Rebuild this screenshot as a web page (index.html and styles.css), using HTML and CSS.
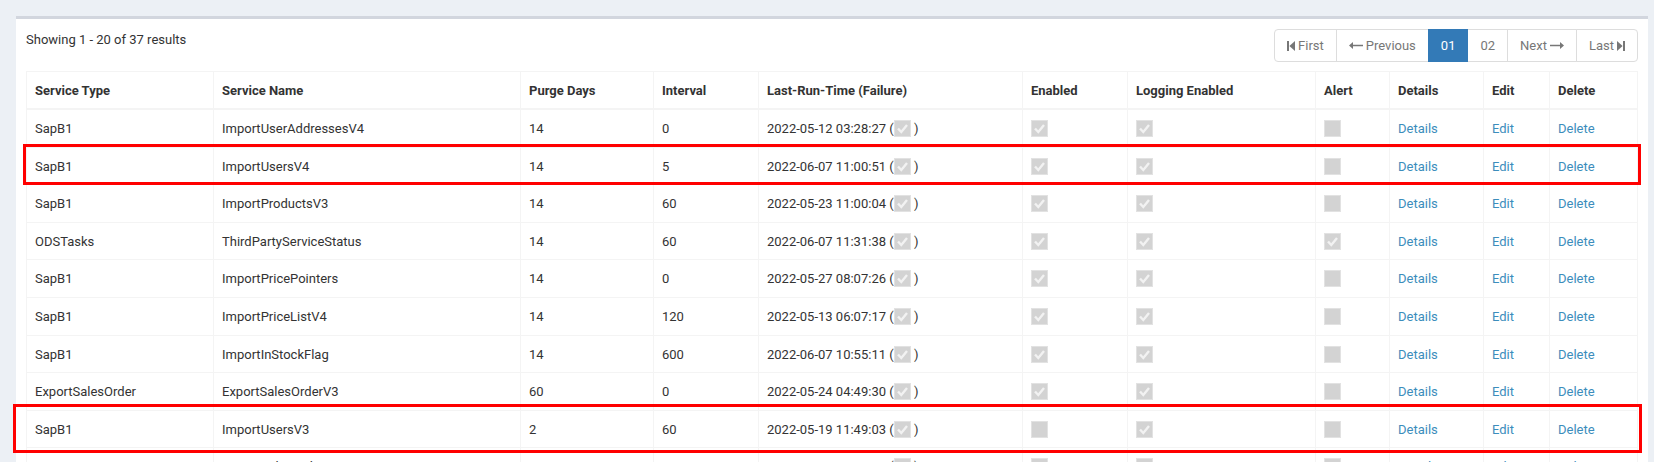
FILE: index.html
```
<!DOCTYPE html>
<html>
<head>
<meta charset="utf-8">
<title>Services</title>
<link rel="stylesheet" href="styles.css">
</head>
<body>
<div class="page">
	<div class="content">
		<div class="box">
			<div class="box-body">
				<div class="toolbar">
					<div class="summary">Showing 1 - 20 of 37 results</div>
					<ul class="pagination">
						<li><a href="javascript:;"><svg class="ico" width="8" height="10" viewBox="0 0 8 10"><rect x="0" y="0" width="2" height="10" fill="#777"/><path d="M8 0 L2.4 5 L8 10 Z" fill="#777"/></svg>First</a></li>
						<li><a href="javascript:;"><svg class="ico" width="14" height="7" viewBox="0 0 14 7"><path d="M0 3.5 L4 0 L4 2.8 L14 2.8 L14 4.2 L4 4.2 L4 7 Z" fill="#777"/></svg>Previous</a></li>
						<li class="active"><a href="javascript:;">01</a></li>
						<li><a href="javascript:;">02</a></li>
						<li><a href="javascript:;">Next<svg class="ico ico-r" width="14" height="7" viewBox="0 0 14 7"><path d="M14 3.5 L10 0 L10 2.8 L0 2.8 L0 4.2 L10 4.2 L10 7 Z" fill="#777"/></svg></a></li>
						<li><a href="javascript:;">Last<svg class="ico ico-r" width="8" height="10" viewBox="0 0 8 10"><path d="M0 0 L5.6 5 L0 10 Z" fill="#777"/><rect x="6" y="0" width="2" height="10" fill="#777"/></svg></a></li>
					</ul>
				</div>
				<table class="table">
					<colgroup>
						<col style="width:187px"><col style="width:307px"><col style="width:133px"><col style="width:105px">
						<col style="width:264px"><col style="width:105px"><col style="width:188px"><col style="width:74px">
						<col style="width:94px"><col style="width:66px"><col style="width:88px">
					</colgroup>
					<thead>
						<tr>
							<th>Service Type</th><th>Service Name</th><th>Purge Days</th><th>Interval</th>
							<th>Last-Run-Time (Failure)</th><th>Enabled</th><th>Logging Enabled</th><th>Alert</th>
							<th>Details</th><th>Edit</th><th>Delete</th>
						</tr>
					</thead>
					<tbody id="rows"></tbody>
				</table>
			</div>
		</div>
	</div>
	<div class="mark mark1"></div>
	<div class="mark mark2"></div>
</div>
<script>
var data=[
	['SapB1','ImportUserAddressesV4',14,0,'2022-05-12 03:28:27',1,1,0],
	['SapB1','ImportUsersV4',14,5,'2022-06-07 11:00:51',1,1,0],
	['SapB1','ImportProductsV3',14,60,'2022-05-23 11:00:04',1,1,0],
	['ODSTasks','ThirdPartyServiceStatus',14,60,'2022-06-07 11:31:38',1,1,1],
	['SapB1','ImportPricePointers',14,0,'2022-05-27 08:07:26',1,1,0],
	['SapB1','ImportPriceListV4',14,120,'2022-05-13 06:07:17',1,1,0],
	['SapB1','ImportInStockFlag',14,600,'2022-06-07 10:55:11',1,1,0],
	['ExportSalesOrder','ExportSalesOrderV3',60,0,'2022-05-24 04:49:30',1,1,0],
	['SapB1','ImportUsersV3',2,60,'2022-05-19 11:49:03',0,1,0],
	['SapB1','ImportSalesOrdersV3',14,10,'2022-06-07 11:30:12',1,1,0]
];

function chk(on)
{
	return '<span class="chk'+(on?' on':'')+'">'+(on?'<svg width="17" height="17" viewBox="0 0 17 17"><path d="M4 8.5 L7.3 12 L13 5" fill="none" stroke="#f2f2f2" stroke-width="2.4"/></svg>':'')+'</span>';
}

var oBody=document.getElementById('rows');
var html='';
for(var i=0;i<data.length;i++)
{
	var d=data[i];
	html+='<tr>'+
		'<td>'+d[0]+'</td>'+
		'<td>'+d[1]+'</td>'+
		'<td>'+d[2]+'</td>'+
		'<td>'+d[3]+'</td>'+
		'<td>'+d[4]+' ('+chk(1)+' )</td>'+
		'<td>'+chk(d[5])+'</td>'+
		'<td>'+chk(d[6])+'</td>'+
		'<td>'+chk(d[7])+'</td>'+
		'<td><a href="javascript:;">Details</a></td>'+
		'<td><a href="javascript:;">Edit</a></td>'+
		'<td><a href="javascript:;">Delete</a></td>'+
		'</tr>';
}
oBody.innerHTML=html;
</script>
</body>
</html>
```

FILE: styles.css
```
* {padding:0; margin:0; box-sizing:border-box;}
body {background:#ecf0f5; font-family:Roboto, "Noto Sans", sans-serif; font-size:13px; line-height:20px; color:#333;}
a {color:#3c8dbc; text-decoration:none;}

.page {position:relative; height:462px; overflow:hidden;}
.content {padding:16px 6px 0 16px;}
.box {background:white; border-top:3px solid #d2d6de;}
.box-body {padding:10px;}

.toolbar {display:flex; justify-content:space-between; align-items:flex-start; margin-bottom:9px;}
.summary {line-height:20px; padding-top:1px;}

.pagination {display:flex; list-style:none;}
.pagination li a {display:flex; align-items:center; height:33px; padding:0 12px; border:1px solid #ddd; margin-left:-1px; color:#777; background:#fff;}
.pagination li:first-child a {margin-left:0; border-radius:4px 0 0 4px;}
.pagination li:last-child a {border-radius:0 4px 4px 0;}
.pagination li.active a {background:#337ab7; border-color:#337ab7; color:#fff; position:relative;}
.ico {margin-right:3px;}
.ico-r {margin-right:0; margin-left:3px;}

.table {width:100%; border-collapse:collapse; table-layout:fixed; border:1px solid #f4f4f4;}
.table th, .table td {border:1px solid #f4f4f4; padding:9px 8px 7px; text-align:left; vertical-align:top; white-space:nowrap; overflow:hidden;}
.table th {font-weight:700; border-bottom:2px solid #f4f4f4; line-height:20px;}
.table td {line-height:20.6px;}

.chk {display:inline-block; width:17px; height:17px; background:#d3d3d3; border:1px solid #e2e2e2; vertical-align:-4px;}
.chk svg {display:block; margin:-1px;}

.mark {position:absolute; border:3px solid #ff0000;}
.mark1 {left:23px; top:144px; width:1618px; height:41px;}
.mark2 {left:13px; top:404px; width:1629px; height:49px;}
```
